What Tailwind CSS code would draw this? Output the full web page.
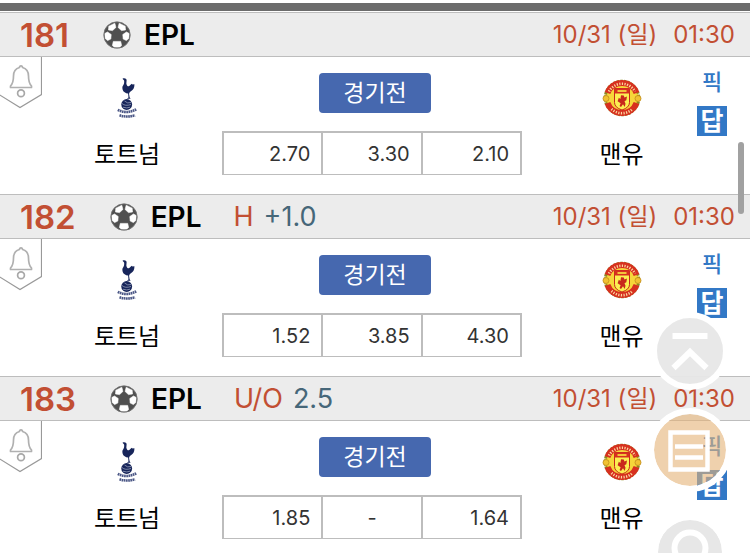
<!DOCTYPE html>
<html lang="ko">
<head>
    <meta charset="UTF-8">
    <meta name="viewport" content="width=device-width, initial-scale=1.0">
    <title>EPL</title>
    <script src="https://cdn.jsdelivr.net/npm/@tailwindcss/browser@4"></script>
</head>
<body class="h-screen overflow-hidden bg-white font-[Inter,'Noto_Sans_CJK_KR',sans-serif] text-black">

    <!-- Shared icons -->
    <svg class="hidden" aria-hidden="true">
        <symbol id="icon-ball" viewBox="0 0 28 28">
            <circle cx="14" cy="14" r="13.3" fill="#505050"/>
            <g fill="#fff" stroke="#fff" stroke-width=".6" stroke-linejoin="round">
                <path d="M5.800 5.200 11.800 2.200 12.900 6.400 9.600 9.600 5.500 9z"/>
                <path d="M22.200 5.200 16.200 2.200 15.100 6.400 18.400 9.600 22.500 9z"/>
                <path d="M1.800 12.500 4.500 11 8.200 13.500 7.800 18 4.600 19.600 2.200 17.500z"/>
                <path d="M26.200 12.500 23.500 11 19.800 13.500 20.200 18 23.400 19.600 25.800 17.500z"/>
                <path d="M10.300 20.400h7.400l.9 4.200-2 1.600h-5.200l-2-1.600z"/>
            </g>
            <circle cx="14" cy="14" r="13.200" fill="none" stroke="#777" stroke-width=".8"/>
        </symbol>
        <symbol id="icon-bell" viewBox="0 0 42 52">
            <path d="M-1 37.500 20 50.500 41.500 37.500V-1" fill="none" stroke="#999" stroke-width="1.200"/>
            <path d="M19.500 10.500c0-2.300 3-2.300 3 0 4.500 1.200 6 4.500 6 8.500 0 5.500.5 7.500 3 10v1.500h-21V29c2.500-2.500 3-4.500 3-10 0-4 1.500-7.300 6-8.500z" fill="none" stroke="#b0b0b0" stroke-width="1.700" stroke-linejoin="round"/>
            <circle cx="21" cy="36.300" r="3.400" fill="none" stroke="#a8a8a8" stroke-width="1.700"/>
        </symbol>
        <symbol id="logo-tottenham" viewBox="0 0 20 40">
            <g fill="#17255a">
                <path d="M5.500.7c1.800-.9 4-.2 4.100 1.500.1 1.500-.5 2.600-.1 4 .3 1.400 1.300 2.300 2.300 2 1.100-.4 2-2 3.200-2.500l.4.900 2-.3c.2 3.600-1.200 5.500-3.200 6.600-1.500 1-2.100 1.700-2.100 3.400l.5 3 1 1.400h-3.800l1.700-1.200-.4-4c-2.500-.2-4.900-1.500-5.500-4-.4-1.800-.4-3.400.8-4.600.9-1.200.9-2.700.7-4.400z"/>
                <circle cx="9.700" cy="26.500" r="5.400"/>
            </g>
            <path d="M5 25.500q3 3 9 1M7.500 23q3 3 6.500 1.500M6 29.200q4 1.500 7 0" fill="none" stroke="#a9b1c9" stroke-width=".7"/>
            <path d="M.8 31.900q9 4.500 18.400-.6M2.500 37.300q7.500 2.500 15.500 0" fill="none" stroke="#4b5786" stroke-width="2.600" stroke-dasharray="1.700 .5"/>
        </symbol>
        <symbol id="logo-manutd" viewBox="0 0 40 40">
            <circle cx="20" cy="20" r="16.800" fill="#f6d63a" stroke="#8b8a22" stroke-width="3" stroke-dasharray="2.500 1"/>
            <path d="M5.500 15a15.500 15.500 0 0 1 29 0M5.500 25a15.500 15.500 0 0 0 29 0" fill="none" stroke="#d7301f" stroke-width="6"/>
            <path d="M7 13.500a14.800 14.800 0 0 1 26 0" fill="none" stroke="#fbd7a0" stroke-width="2.600" stroke-dasharray="1.200 1.400"/>
            <path d="M9.500 31a15.200 15.200 0 0 0 21 0" fill="none" stroke="#fbd7a0" stroke-width="2.600" stroke-dasharray="1.200 1.400"/>
            <path d="M12.500 10.500h15v14q0 5-7.500 7.500-7.500-2.500-7.500-7.500z" fill="#fbee52" stroke="#c8281c" stroke-width="1"/>
            <path d="M12.500 10.500h15v5h-15z" fill="#d7301f"/>
            <path d="M15.500 12h9v2h-9z" fill="#f3c43a"/>
            <path d="m19 17.300 2.800.2.600 2 2.600-1-.7 3.800-1.800 1 1 2.500-.8 3.200-1.700-2.800-2 2.800-1.400-1 1-2.700-3-2 1.200-3.600 1.600 1.400z" fill="#c8281c"/>
            <circle cx="4" cy="20.500" r="3" fill="#f1c232" stroke="#c08a1c" stroke-width=".8"/>
            <circle cx="36" cy="20.500" r="3" fill="#f1c232" stroke="#c08a1c" stroke-width=".8"/>
        </symbol>
    </svg>

    <div class="mt-[3px] mb-px h-2 bg-[#6c6c6c]"></div>
    <main id="match-list"></main>

    <!-- Scroll thumb -->
    <div class="fixed top-[142px] right-[6px] h-[72px] w-[6px] rounded-full bg-[#a1a1a1]"></div>

    <!-- Floating buttons -->
    <nav class="fixed top-[312px] right-[18px] flex flex-col items-center gap-[18px]">
        <button type="button" aria-label="맨 위로" class="size-[78px] rounded-full border-[6px] border-white bg-[#e7e7e7]/95">
            <svg viewBox="0 0 66 66" class="size-full" fill="none" stroke="#fff">
                <path d="M15.500 18h35" stroke-width="6"/>
                <path d="m16.500 50 16.500-16 16.500 16" stroke-width="6"/>
            </svg>
        </button>
        <button type="button" aria-label="목록" class="size-[84px] rounded-full border-[6px] border-white bg-[#e4b377]/60 bg-clip-padding">
            <svg viewBox="0 0 72 72" class="size-full" fill="none" stroke="#fff">
                <path d="M16.500 18.500h37v37h-37z" stroke-width="4.500"/>
                <path d="M21 32.500h28M21 43.500h28" stroke-width="4.500"/>
            </svg>
        </button>
        <button type="button" aria-label="검색" class="size-[84px] rounded-full border-[10px] border-white bg-[#e7e7e7] bg-clip-padding">
            <svg viewBox="0 0 64 64" class="size-full" fill="none" stroke="#fff">
                <circle cx="32" cy="28" r="15.500" stroke-width="6"/>
            </svg>
        </button>
    </nav>

    <script>
        const matches = [
            { no: '181', type: '', line: '', odds: ['2.70', '3.30', '2.10'] },
            { no: '182', type: 'H', line: '+1.0', odds: ['1.52', '3.85', '4.30'] },
            { no: '183', type: 'U/O', line: '2.5', odds: ['1.85', '-', '1.64'] }
        ];

        // Odds are right aligned, an empty one is a centred dash
        function renderOdd(odd) {
            const align = odd === '-' ? 'text-center' : 'pr-[11px] text-right';
            return `<td class="h-[44px] border-t-2 border-r-2 border-b border-[#bdbdbd] p-0 pt-px ${align}">${odd}</td>`;
        }

        function renderMatch(match) {
            return `
                <section>
                    <header class="flex h-[45px] items-center justify-between border-y border-[#bdbdbd] bg-[#ececec] pr-[15px] pl-5">
                        <div class="flex items-center text-[28px] leading-8">
                            <span class="text-[33px] font-semibold text-[#c24f33]">${match.no}</span>
                            <svg class="ml-[34px] size-7"><use href="#icon-ball"/></svg>
                            <h2 class="ml-[13px] font-semibold">EPL</h2>
                            <span class="ml-8 text-[27px] text-[#c24f33]">${match.type}</span>
                            <span class="ml-[10px] text-[27px] text-[#466779]">${match.line}</span>
                        </div>
                        <time class="flex gap-4 text-[24px] leading-8 text-[#c24f33]" datetime="10-31T01:30">
                            <span>10/31 (일)</span><span>01:30</span>
                        </time>
                    </header>
                    <div class="relative grid h-[137px] grid-cols-[1fr_306px_1fr] text-[24px] leading-8">
                        <button type="button" aria-label="알림" class="absolute top-0 left-0 h-[52px] w-[42px]">
                            <svg class="size-full"><use href="#icon-bell"/></svg>
                        </button>
                        <div class="flex flex-col items-center gap-[21px] pt-[21px] pl-8">
                            <svg class="h-10 w-5"><use href="#logo-tottenham"/></svg>
                            <span>토트넘</span>
                        </div>
                        <div class="flex flex-col items-center gap-[18px] pt-4">
                            <button type="button" class="h-10 w-28 rounded-[4px] bg-[#4668af] text-[23px] text-white">경기전</button>
                            <table class="w-[300px] table-fixed self-start border-separate border-spacing-0 border-l-2 border-[#bdbdbd] text-[20px] leading-6 text-[#333]">
                                <tr>${match.odds.map(renderOdd).join('')}</tr>
                            </table>
                        </div>
                        <div class="flex pt-[21px] pr-[23px] pl-[18px]">
                            <div class="flex flex-1 flex-col items-center gap-[21px]">
                                <svg class="size-10"><use href="#logo-manutd"/></svg>
                                <span>맨유</span>
                            </div>
                            <div class="-mt-3 flex w-[30px] flex-col items-center gap-2 text-[#3278c6]">
                                <a href="#" class="text-[22px] font-medium">픽</a>
                                <a href="#" class="size-[30px] bg-[#3278c6] text-center text-[25px] leading-[30px] font-bold text-white">답</a>
                            </div>
                        </div>
                    </div>
                </section>
            `;
        }

        document.getElementById('match-list').innerHTML = matches.map(renderMatch).join('');
    </script>
</body>
</html>
